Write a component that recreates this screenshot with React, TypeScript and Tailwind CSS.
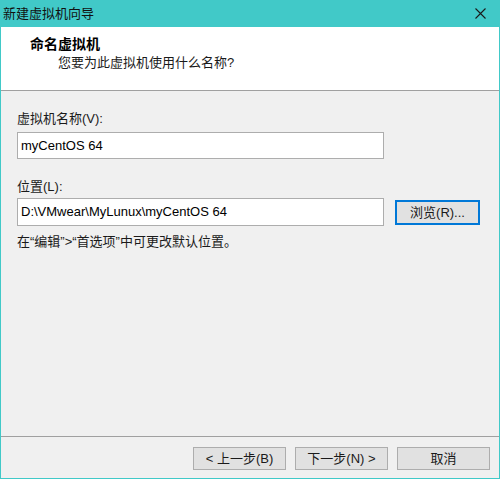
const font = "font-['Liberation_Sans','Noto_Sans_CJK_SC',_sans-serif]";

function WinButton({ children }: { children: React.ReactNode }) {
  return (
    <button className="h-[23px] w-[93px] border border-[#adadad] bg-[#e1e1e1] text-[13px] leading-none text-[#1a1a1a]">
      {children}
    </button>
  );
}

export default function App() {
  return (
    <div className={`flex h-[479px] w-[500px] flex-col bg-[#41c9c8] ${font}`}>
      {/* title bar */}
      <div className="flex h-[27px] items-center justify-between pl-[3px] pr-[14px]">
        <span className="text-[13px] text-[#111]">新建虚拟机向导</span>
        <svg width="11" height="11" viewBox="0 0 11 11" className="text-[#1a1a1a]">
          <path d="M0.5 0.5 L10.5 10.5 M10.5 0.5 L0.5 10.5" stroke="currentColor" strokeWidth="1.1" />
        </svg>
      </div>

      <div className="mx-px mb-px flex flex-1 flex-col bg-[#f0f0f0]">
        {/* header */}
        <div className="h-[64px] border-b border-[#a0a0a0] bg-white pl-[29px] pt-[8px]">
          <div className="text-[14px] font-bold leading-[18px] text-black">命名虚拟机</div>
          <div className="ml-[28px] mt-px text-[13px] leading-[18px] text-[#1a1a1a]">
            您要为此虚拟机使用什么名称?
          </div>
        </div>

        {/* body */}
        <div className="flex-1 pl-[16px] pt-[19px] text-[13px] text-[#1a1a1a]">
          <div className="leading-[18px]">虚拟机名称(V):</div>
          <div className="mt-[4px] flex h-[27px] w-[367px] items-center border border-[#adadad] bg-white px-[3px] text-[13px] text-black">
            myCentOS 64
          </div>

          <div className="mt-[19px] leading-[18px]">位置(L):</div>
          <div className="mt-[2px] flex items-center gap-[11px]">
            <div className="flex h-[28px] w-[367px] items-center border border-[#adadad] bg-white px-[3px] text-[13px] text-black">
              D:\VMwear\MyLunux\myCentOS 64
            </div>
            <button className="h-[25px] w-[85px] border-2 border-[#0078d7] bg-[#e1e1e1] text-[13px] leading-none text-[#1a1a1a]">
              浏览(R)...
            </button>
          </div>

          <div className="mt-[7px] leading-[18px]">在“编辑”&gt;“首选项”中可更改默认位置。</div>
        </div>

        {/* footer */}
        <div className="flex h-[42px] justify-end gap-[9px] border-t border-[#a0a0a0] pr-[9px] pt-[10px]">
          <WinButton>&lt; 上一步(B)</WinButton>
          <WinButton>下一步(N) &gt;</WinButton>
          <WinButton>取消</WinButton>
        </div>
      </div>
    </div>
  );
}
